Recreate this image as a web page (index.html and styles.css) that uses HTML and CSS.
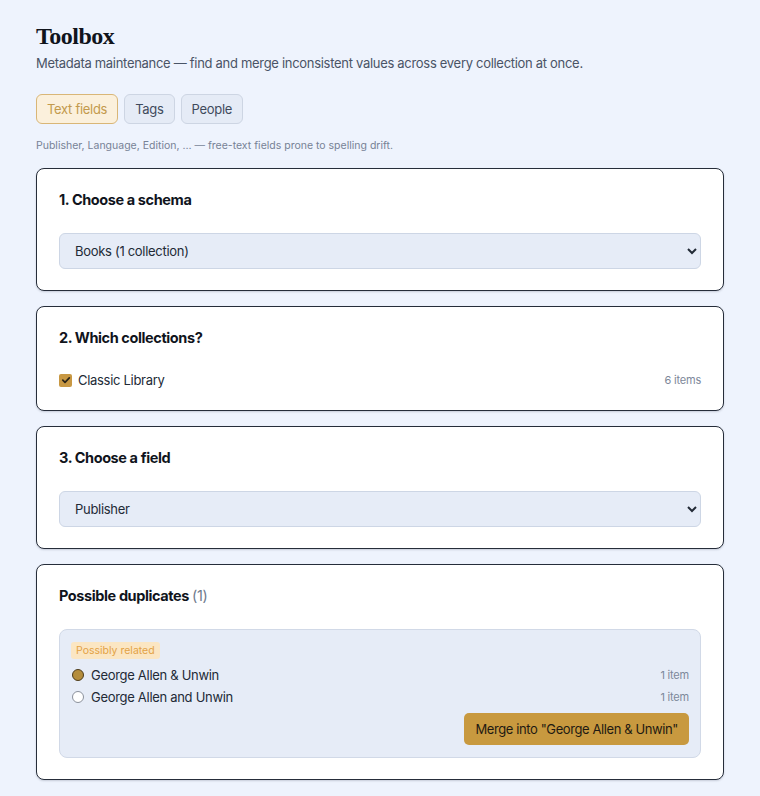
FILE: index.html
```html
<!DOCTYPE html>
<html lang="en">
<head>
<meta charset="utf-8">
<title>Toolbox</title>
<link rel="stylesheet" href="styles.css">
</head>
<body>
<main class="page">
  <h1 class="title">Toolbox</h1>
  <p class="subtitle">Metadata maintenance — find and merge inconsistent values across every collection at once.</p>
  <nav class="tabs">
    <button class="tab tab-active">Text fields</button>
    <button class="tab">Tags</button>
    <button class="tab">People</button>
  </nav>
  <p class="hint">Publisher, Language, Edition, … — free-text fields prone to spelling drift.</p>

  <section class="card">
    <h2 class="card-title">1. Choose a schema</h2>
    <select class="select"><option>Books (1 collection)</option></select>
  </section>

  <section class="card">
    <h2 class="card-title">2. Which collections?</h2>
    <div class="row">
      <span class="check"><svg viewBox="0 0 12 12" width="12" height="12"><path d="M2.8 6.2 L5 8.4 L9.3 3.8" fill="none" stroke="#2a2418" stroke-width="1.7" stroke-linecap="round" stroke-linejoin="round"/></svg></span>
      <span class="row-label">Classic Library</span>
      <span class="count">6 items</span>
    </div>
  </section>

  <section class="card">
    <h2 class="card-title">3. Choose a field</h2>
    <select class="select"><option>Publisher</option></select>
  </section>

  <section class="card">
    <h2 class="card-title">Possible duplicates <span class="muted">(1)</span></h2>
    <div class="group">
      <span class="badge">Possibly related</span>
      <div class="radios">
        <div class="row">
          <span class="radio radio-on"></span>
          <span class="row-label">George Allen &amp; Unwin</span>
          <span class="count">1 item</span>
        </div>
        <div class="row">
          <span class="radio"></span>
          <span class="row-label">George Allen and Unwin</span>
          <span class="count">1 item</span>
        </div>
      </div>
      <div class="actions">
        <button class="merge">Merge into "George Allen &amp; Unwin"</button>
      </div>
    </div>
  </section>
</main>
</body>
</html>
```

FILE: styles.css
```css
* { box-sizing: border-box; }
html, body { margin: 0; padding: 0; }
body {
  background: #eef3fd;
  font-family: Inter, "Noto Sans", sans-serif;
  color: #1f2633;
  letter-spacing: -0.3px;
}
.page {
  padding: 21px 36px 8px;
  display: flex;
  flex-direction: column;
}
.title {
  margin: 0;
  font-family: "Liberation Serif", serif;
  font-weight: 700;
  font-size: 24px;
  line-height: 30px;
  color: #10141c;
  letter-spacing: -0.5px;
}
.subtitle {
  margin: 2px 0 0;
  font-size: 13px;
  line-height: 20px;
  color: #4a5466;
}
.tabs {
  margin-top: 21px;
  display: flex;
  gap: 6px;
}
.tab {
  height: 30px;
  padding: 0 10px;
  font-family: inherit;
  font-size: 13px;
  letter-spacing: -0.3px;
  border-radius: 6px;
  border: 1px solid #cdd5e3;
  background: #e5ebf6;
  color: #3f4a5c;
}
.tab-active {
  background: #fbf0dc;
  border-color: #d9b677;
  color: #c39a4c;
}
.hint {
  margin: 14px 0 0;
  font-size: 10.5px;
  line-height: 16px;
  color: #778296;
  letter-spacing: 0;
}
.card {
  margin-top: 14px;
  background: #fff;
  border: 1px solid #262d3a;
  border-radius: 8px;
  padding: 20px 22px 21px;
  box-shadow: 0 1px 2px rgba(20, 30, 50, 0.18);
}
.card + .card { margin-top: 15px; }
.card-title {
  margin: 0 0 22px;
  font-size: 14.5px;
  line-height: 22px;
  font-weight: 700;
  letter-spacing: -0.4px;
  color: #10141c;
}
.muted { font-weight: 400; color: #6f7a8c; }
.select {
  display: block;
  width: 100%;
  height: 36px;
  padding: 0 8px 0 11px;
  font-family: inherit;
  font-size: 13px;
  letter-spacing: -0.3px;
  color: #222a36;
  background: #e6ecf7;
  border: 1px solid #cdd6e5;
  border-radius: 6px;
}
.row {
  display: flex;
  align-items: center;
  height: 18px;
  font-size: 13px;
  color: #222a36;
}
.check {
  width: 13px;
  height: 13px;
  border-radius: 2px;
  background: #c89843;
  display: inline-flex;
  align-items: center;
  justify-content: center;
  margin-right: 6px;
}
.row-label { flex: 1; }
.count { font-size: 11px; color: #7d889a; letter-spacing: -0.2px; }
.group {
  background: #e6ecf7;
  border: 1px solid #d1d9e7;
  border-radius: 8px;
  padding: 12px 11px 12px;
  display: flex;
  flex-direction: column;
  align-items: flex-start;
}
.badge {
  display: inline-block;
  font-size: 10.5px;
  line-height: 17px;
  padding: 0 5px;
  border-radius: 3px;
  background: #fbe6c3;
  color: #e3a245;
  letter-spacing: 0;
}
.radios {
  margin-top: 7px;
  align-self: stretch;
  display: flex;
  flex-direction: column;
  gap: 4px;
}
.radio {
  width: 12px;
  height: 12px;
  border-radius: 50%;
  border: 1px solid #8b919c;
  background: #fff;
  margin: 0 7px 0 1px;
}
.radio-on {
  background: #b48d3c;
  border: 1.5px solid #4d3c1c;
}
.actions {
  align-self: stretch;
  display: flex;
  justify-content: flex-end;
  margin-top: 7px;
}
.merge {
  height: 32px;
  padding: 0 11px;
  border: none;
  border-radius: 5px;
  background: #c8993f;
  color: #1f1a12;
  font-family: inherit;
  font-size: 13px;
  letter-spacing: -0.4px;
}
```
